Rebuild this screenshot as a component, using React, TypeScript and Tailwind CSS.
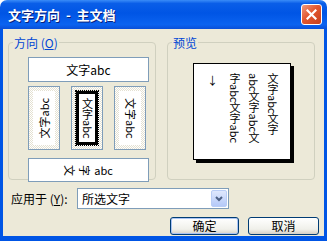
import { ReactNode } from "react";

const cjk = "font-['SimSun','Noto_Sans_CJK_SC',sans-serif]";
const hatch =
  "bg-[repeating-conic-gradient(#ffffff_0%_25%,#e4e1d2_0%_50%)] bg-[length:2px_2px]";

function OptionBox({
  className,
  selected = false,
  children,
}: {
  className: string;
  selected?: boolean;
  children: ReactNode;
}) {
  return (
    <div className={`border border-[#7f9db9] ${hatch} p-[4px] ${className}`}>
      <div
        className={`flex h-full w-full items-center justify-center bg-white ${
          selected ? "border-[3px] border-black outline outline-1 outline-dotted outline-black" : ""
        }`}
      >
        {children}
      </div>
    </div>
  );
}

function GroupBox({
  label,
  className,
  children,
}: {
  label: ReactNode;
  className: string;
  children: ReactNode;
}) {
  return (
    <fieldset className={`rounded-[4px] border border-[#d0d0bf] ${className}`}>
      <legend className="ml-[4px] px-[1px] text-[12px] leading-[13px] text-[#0046d5]">
        {label}
      </legend>
      {children}
    </fieldset>
  );
}

export default function App() {
  return (
    <div className={`flex h-[241px] w-[327px] flex-col overflow-hidden ${cjk} text-black`}>
      {/* title bar */}
      <div className="flex h-[29px] shrink-0 items-center justify-between rounded-t-[7px] bg-[linear-gradient(180deg,#3a8cf8_0%,#0a5ee8_12%,#0055e5_45%,#0b63f0_85%,#0a4fd8_100%)] pl-[8px] pr-[5px]">
        <span className="whitespace-pre pt-[1px] text-[13px] font-bold text-white [text-shadow:1px_1px_#0a1f7a]">
          {"文字方向  -  主文档"}
        </span>
        <div className="flex h-[21px] w-[21px] items-center justify-center rounded-[3px] border border-white bg-[linear-gradient(135deg,#f09a7e_0%,#e2572f_45%,#c8401c_100%)]">
          <svg width="11" height="11" viewBox="0 0 11 11">
            <path d="M1.5 1.5 L9.5 9.5 M9.5 1.5 L1.5 9.5" stroke="white" strokeWidth="2.2" strokeLinecap="square" />
          </svg>
        </div>
      </div>

      {/* client */}
      <div className="flex flex-1 flex-col border-x-[3px] border-b-[5px] border-[#0055e5] bg-[#ece9d8] pl-[5px] pt-[7px]">
        <div className="flex gap-[11px]">
          <GroupBox label={<>方向 (<span className="underline">O</span>)</>} className="h-[144px] w-[148px]">
            <div className="flex flex-col pl-[19px] pt-[8px]">
              <div className="flex h-[25px] w-[121px] items-center justify-center border border-[#7f9db9] bg-white text-[12px]">
                文字abc
              </div>
              <div className="mt-[4px] flex h-[64px] gap-[11px]">
                <OptionBox className="w-[32px]">
                  <span className="-rotate-90 whitespace-nowrap text-[11px]">文字abc</span>
                </OptionBox>
                <OptionBox className="w-[32px]" selected>
                  <span className="text-[11px] leading-[11px] [writing-mode:vertical-rl]">文字abc</span>
                </OptionBox>
                <OptionBox className="w-[32px]">
                  <span className="rotate-90 whitespace-nowrap text-[11px]">文字abc</span>
                </OptionBox>
              </div>
              <div className="mt-[8px] flex h-[24px] w-[121px] items-center justify-center gap-[4px] border border-[#7f9db9] bg-white text-[11px] leading-[11px]">
                <span className="inline-block w-[11px] rotate-90 text-center">文</span>
                <span className="inline-block w-[11px] rotate-90 text-center">字</span>
                <span>abc</span>
              </div>
            </div>
          </GroupBox>

          <GroupBox label="预览" className="h-[144px] w-[148px]">
            <div className="pl-[25px] pt-[14px]">
              <div className="flex h-[97px] w-[98px] justify-end gap-[6px] border border-black bg-white pr-[11px] pt-[9px] text-[11px] leading-[13px] shadow-[3px_3px_0_#000]">
                <span className="pt-[1px] text-[11px]">↓</span>
                <span className="ml-[4px] [writing-mode:vertical-rl]">字abc文字abc</span>
                <span className="[writing-mode:vertical-rl]">abc文字abc文</span>
                <span className="[writing-mode:vertical-rl]">文字abc文字</span>
              </div>
            </div>
          </GroupBox>
        </div>

        {/* apply to */}
        <div className="mt-[8px] flex items-center">
          <span className="w-[69px] pl-[3px] text-[12px]">
            应用于 (<span className="underline">Y</span>):
          </span>
          <div className="flex h-[21px] w-[152px] items-center justify-between border border-[#7f9db9] bg-white pl-[4px] pr-[1px] text-[12px]">
            <span>所选文字</span>
            <div className="flex h-[17px] w-[16px] items-center justify-center rounded-[2px] border border-[#b9cdf6] bg-[linear-gradient(180deg,#dfe8fd_0%,#b5c9f8_100%)]">
              <svg width="8" height="6" viewBox="0 0 8 6">
                <path d="M1 1 L4 4 L7 1" stroke="#4d6185" strokeWidth="2" fill="none" />
              </svg>
            </div>
          </div>
        </div>

        {/* buttons */}
        <div className="mt-[8px] flex justify-end gap-[9px] pr-[5px]">
          <button className="flex h-[18px] w-[69px] items-center justify-center rounded-[3px] border border-[#003c74] bg-[linear-gradient(180deg,#ffffff_0%,#f0f0ea_70%,#d6d0c5_100%)] text-[12px] shadow-[inset_0_0_0_1px_#a9c3f4]">
            确定
          </button>
          <button className="flex h-[18px] w-[71px] items-center justify-center rounded-[3px] border border-[#003c74] bg-[linear-gradient(180deg,#ffffff_0%,#f0f0ea_70%,#d6d0c5_100%)] text-[12px]">
            取消
          </button>
        </div>
      </div>
    </div>
  );
}
